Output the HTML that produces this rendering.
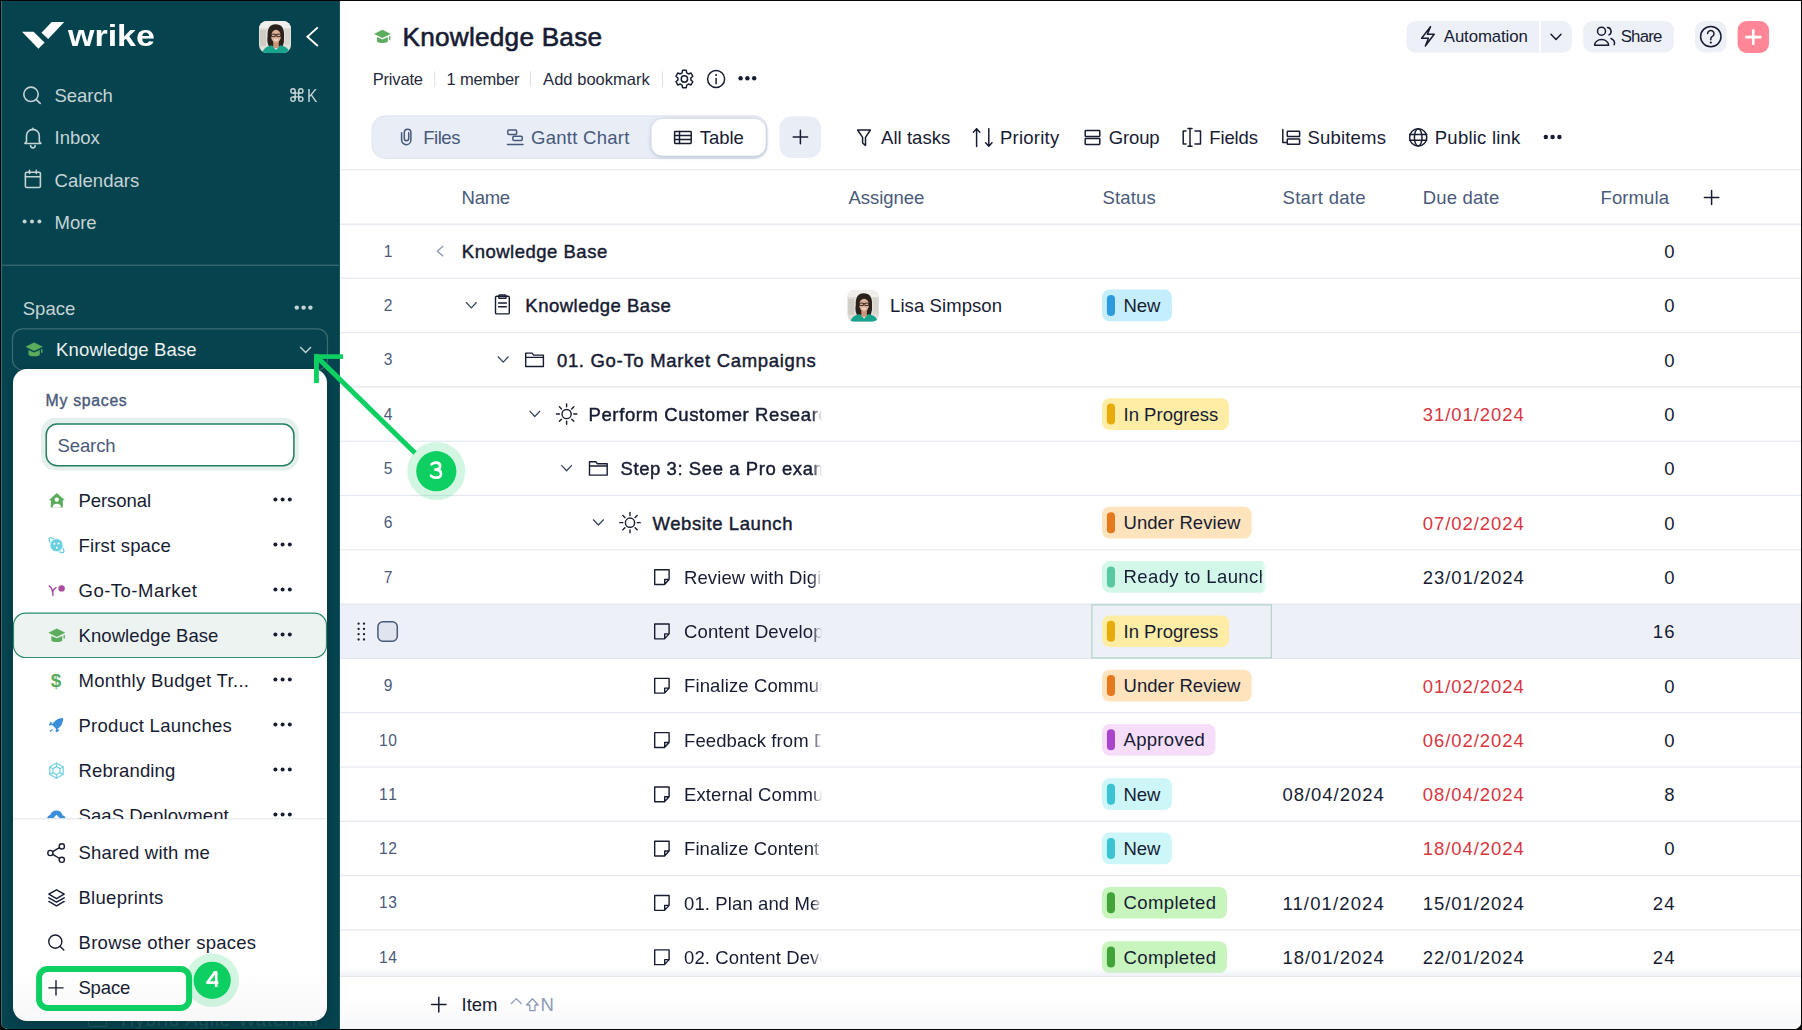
<!DOCTYPE html>
<html><head><meta charset="utf-8"><title>Wrike Knowledge Base</title>
<style>
html,body{margin:0;padding:0;}
body{width:1802px;height:1030px;overflow:hidden;background:#060606;font-family:"Liberation Sans",sans-serif;}
#pg{position:absolute;left:1px;top:1px;width:1800px;height:1028px;overflow:hidden;background:#fff;border-bottom-right-radius:7px;border-bottom-left-radius:7px;}
#inner{position:absolute;left:-1px;top:-1px;width:1802px;height:1030px;}
.abs{position:absolute;}
.t{position:absolute;line-height:0;white-space:nowrap;}
svg.abs{overflow:visible;}
</style></head><body>
<div id="pg"><div id="inner">
<div class="abs" style="left:0;top:0;width:340px;height:1030px;background:#05434e"></div>
<div class="abs" style="left:1px;top:0;width:1px;height:1030px;background:#3a6d75"></div>
<div class="abs" style="left:339px;top:0;width:1px;height:1030px;background:#1b5660"></div>
<svg class="abs" width="1802" height="1030" style="left:0;top:0"><polygon points="22,31.8 33.5,31.8 44.6,42.6 38.4,48.8" fill="#fff"/><polygon points="41.5,32.8 51.7,22 64.2,22 48.2,38.9" fill="#fff"/><clipPath id="av1"><rect x="259" y="21" width="32" height="32" rx="8"/></clipPath><g clip-path="url(#av1)"><g transform="translate(259,21) scale(1.0000)"><rect width="32" height="32" fill="#e2dfda"/><rect width="32" height="7" fill="#f1efeb"/><rect x="1" y="9" width="6" height="16" fill="#c9c4bc" opacity=".7"/><rect x="26" y="8" width="5" height="16" fill="#d6d2cb" opacity=".8"/><path d="M8.6 15 Q8 3.4 16.6 3.2 Q25.4 3.2 25 14.5 Q25.6 21 23.6 25.5 L10 25.5 Q7.6 21 8.6 15 Z" fill="#2a211c"/><rect x="14.2" y="20" width="5.6" height="7" fill="#c9967b"/><ellipse cx="17" cy="15.2" rx="4.9" ry="6.4" fill="#ddb197"/><path d="M12.4 13.2 h3.8 v2.4 h-3.8 z M17.8 13.2 h3.8 v2.4 h-3.8 z M16.2 13.8 h1.6" fill="none" stroke="#2a211c" stroke-width="0.9"/><path d="M15 18.6 q2 1.3 4 0" fill="none" stroke="#fff" stroke-width="0.9"/><path d="M3 32 Q5 25.5 12.6 24.2 L17 29 L21.4 24.2 Q29 25.5 31 32 Z" fill="#17a38c"/></g></g><polyline points="317.8,27.4 307.4,36.7 317.8,46" fill="none" stroke="#fff" stroke-width="1.9"/><circle cx="31" cy="94.3" r="7.2" fill="none" stroke="#c5d3d5" stroke-width="1.6" stroke-linecap="round" stroke-linejoin="round"/><line x1="36.3" y1="99.6" x2="40.2" y2="103.4" fill="none" stroke="#c5d3d5" stroke-width="1.6" stroke-linecap="round" stroke-linejoin="round"/><path d="M26.5 141.5 V135.8 a6.4 6.4 0 0 1 12.8 0 V141.5 l1.6 2 H24.9 z M32.9 128.3 v1.3 M30.6 145.6 a2.3 2.3 0 0 0 4.6 0" fill="none" stroke="#c5d3d5" stroke-width="1.6" stroke-linecap="round" stroke-linejoin="round"/><rect x="25.4" y="172.2" width="15" height="15.3" rx="1.3" fill="none" stroke="#c5d3d5" stroke-width="1.6" stroke-linecap="round" stroke-linejoin="round"/><path d="M25.4 176.7 H40.4 M29.5 170.3 v3.2 M36.3 170.3 v3.2" fill="none" stroke="#c5d3d5" stroke-width="1.6" stroke-linecap="round" stroke-linejoin="round"/><circle cx="24.6" cy="221.6" r="2" fill="#c5d3d5"/><circle cx="32" cy="221.6" r="2" fill="#c5d3d5"/><circle cx="39.4" cy="221.6" r="2" fill="#c5d3d5"/><rect x="1" y="264.6" width="338" height="1.3" fill="#3a6a72"/><circle cx="296.8" cy="307.6" r="2.2" fill="#c5d3d5"/><circle cx="303.6" cy="307.6" r="2.2" fill="#c5d3d5"/><circle cx="310.4" cy="307.6" r="2.2" fill="#c5d3d5"/><rect x="12.5" y="328.8" width="315" height="41" rx="10" fill="none" stroke="#3d6c74" stroke-width="1.2"/><polyline points="300.2,347 305.6,352.6 311,347" fill="none" stroke="#c5d3d5" stroke-width="1.4"/><g transform="translate(25.9,342.7) scale(1.03)"><polygon points="0,3.95 8,0 16,3.95 8,7.9" fill="#5cac5e" stroke="#5cac5e" stroke-width="0.5" stroke-linejoin="round"/><path d="M2.5,7.1 L8,9.5 L13.5,7.1 V11.2 Q13.5,13.2 8,13.2 Q2.5,13.2 2.5,11.2 Z" fill="#5cac5e"/><rect x="14.7" y="6.1" width="1.4" height="3.9" rx="0.7" fill="#5cac5e"/></g></svg><div class="t" style="left:68.35px;top:35.93px;font-size:29.2px;color:#fff;font-weight:700;transform:scaleX(1.1627);transform-origin:-0.15px 0;">wrike</div><div class="t" style="left:54.60px;top:96.32px;font-size:18.5px;color:#c5d3d5;letter-spacing:-0.060px;">Search</div><svg class="abs" width="1802" height="1030" style="left:0;top:0"><path d="M293 93.1 H300.8 M293 96.9 H300.8 M295.2 90.9 V99.1 M298.6 90.9 V99.1" fill="none" stroke="#c5d3d5" stroke-width="1.4"/><circle cx="293" cy="90.9" r="2.2" fill="none" stroke="#c5d3d5" stroke-width="1.4"/><circle cx="293" cy="99.1" r="2.2" fill="none" stroke="#c5d3d5" stroke-width="1.4"/><circle cx="300.8" cy="90.9" r="2.2" fill="none" stroke="#c5d3d5" stroke-width="1.4"/><circle cx="300.8" cy="99.1" r="2.2" fill="none" stroke="#c5d3d5" stroke-width="1.4"/></svg><div class="t" style="left:306.60px;top:95.82px;font-size:18.5px;color:#c5d3d5;transform:scaleX(0.8422);transform-origin:0.00px 0;">K</div><div class="t" style="left:54.60px;top:138.32px;font-size:18.5px;color:#c5d3d5;letter-spacing:-0.045px;">Inbox</div><div class="t" style="left:54.60px;top:180.82px;font-size:18.5px;color:#c5d3d5;letter-spacing:0.048px;">Calendars</div><div class="t" style="left:54.60px;top:223.12px;font-size:18.5px;color:#c5d3d5;letter-spacing:-0.045px;">More</div><div class="t" style="left:22.80px;top:309.32px;font-size:18.5px;color:#c5d3d5;letter-spacing:-0.012px;">Space</div><div class="t" style="left:56.10px;top:350.12px;font-size:18.5px;color:#eef2f2;letter-spacing:0.127px;">Knowledge Base</div><div class="t" style="left:121.00px;top:1019.62px;font-size:18.5px;color:#1f555c;letter-spacing:0.944px;">Hybrid Agile-Waterfall</div><div class="abs" style="left:88px;top:1016px;width:17px;height:9px;border:1.4px solid #1f555c;border-radius:2px"></div><svg class="abs" width="1802" height="1030" style="left:0;top:0"><g transform="translate(374.5,30) scale(0.99)"><polygon points="0,3.95 8,0 16,3.95 8,7.9" fill="#5cac5e" stroke="#5cac5e" stroke-width="0.5" stroke-linejoin="round"/><path d="M2.5,7.1 L8,9.5 L13.5,7.1 V11.2 Q13.5,13.2 8,13.2 Q2.5,13.2 2.5,11.2 Z" fill="#5cac5e"/><rect x="14.7" y="6.1" width="1.4" height="3.9" rx="0.7" fill="#5cac5e"/></g><rect x="434.2" y="71.3" width="1" height="15.4" fill="#d8deea"/><rect x="530.0" y="71.3" width="1" height="15.4" fill="#d8deea"/><rect x="661.9" y="71.3" width="1" height="15.4" fill="#d8deea"/><polygon points="682.07,72.93 682.55,70.29 686.25,70.29 686.73,72.93 687.65,73.37 688.49,73.95 691.01,73.04 692.86,76.25 690.82,77.98 690.90,79.00 690.82,80.02 692.86,81.75 691.01,84.96 688.49,84.05 687.65,84.63 686.73,85.07 686.25,87.71 682.55,87.71 682.07,85.07 681.15,84.63 680.31,84.05 677.79,84.96 675.94,81.75 677.98,80.02 677.90,79.00 677.98,77.98 675.94,76.25 677.79,73.04 680.31,73.95 681.15,73.37" fill="none" stroke="#171c33" stroke-width="1.5" stroke-linecap="round" stroke-linejoin="round" stroke-width="1.3"/><circle cx="684.4" cy="79" r="3.2" fill="none" stroke="#171c33" stroke-width="1.5" stroke-linecap="round" stroke-linejoin="round" stroke-width="1.3"/><circle cx="716.1" cy="79" r="8.5" fill="none" stroke="#171c33" stroke-width="1.5" stroke-linecap="round" stroke-linejoin="round" stroke-width="1.3"/><path d="M716.1 78.4 v5.4" fill="none" stroke="#171c33" stroke-width="1.5" stroke-linecap="round" stroke-linejoin="round" stroke-width="1.3"/><circle cx="716.1" cy="75.1" r="1" fill="#171c33"/><circle cx="740.6" cy="78.3" r="2.2" fill="#171c33"/><circle cx="747.4" cy="78.3" r="2.2" fill="#171c33"/><circle cx="754.2" cy="78.3" r="2.2" fill="#171c33"/><rect x="1406.4" y="21.1" width="165.6" height="31.6" rx="9" fill="#edf0f7"/><rect x="1539.3" y="21.1" width="1.7" height="31.6" fill="#fff"/><path d="M1430.5 26.6 L1421.6 38.2 H1428.5 L1425.3 46 L1434.2 34.2 H1427.4 Z" fill="none" stroke="#171c33" stroke-width="1.5" stroke-linecap="round" stroke-linejoin="round" stroke-width="1.4"/><polyline points="1551,34.2 1556,39.4 1561,34.2" fill="none" stroke="#171c33" stroke-width="1.5" stroke-linecap="round" stroke-linejoin="round" stroke-width="1.3"/><rect x="1583.2" y="21" width="90.6" height="31.5" rx="9" fill="#edf0f7"/><circle cx="1601.5" cy="31.2" r="4" fill="none" stroke="#171c33" stroke-width="1.5" stroke-linecap="round" stroke-linejoin="round" stroke-width="1.4"/><path d="M1594.6 45.2 a7 5.6 0 0 1 14 0 Z" fill="none" stroke="#171c33" stroke-width="1.5" stroke-linecap="round" stroke-linejoin="round" stroke-width="1.4"/><path d="M1607.5 27.4 a4 4 0 0 1 1.5 7.5 M1611 38.5 a6 5 0 0 1 3.2 6.3" fill="none" stroke="#171c33" stroke-width="1.5" stroke-linecap="round" stroke-linejoin="round" stroke-width="1.4"/><rect x="1695" y="21" width="31.5" height="31.5" rx="9" fill="#edf0f7"/><circle cx="1710.8" cy="36.6" r="10.2" fill="none" stroke="#171c33" stroke-width="1.5" stroke-linecap="round" stroke-linejoin="round" stroke-width="1.4"/><path d="M1707.6 33.6 a3.2 3.2 0 1 1 4.8 2.8 q-1.6 0.9 -1.6 2.6 v0.8" fill="none" stroke="#171c33" stroke-width="1.5" stroke-linecap="round" stroke-linejoin="round" stroke-width="1.5"/><circle cx="1710.8" cy="42.6" r="1.1" fill="#171c33"/><rect x="1737.6" y="21" width="31.4" height="31.9" rx="9" fill="#ff8696"/><path d="M1753.3 29.2 V45 M1745.2 37.1 H1761.4" stroke="#fff" stroke-width="2.6"/><rect x="372" y="115.8" width="395" height="42.6" rx="13" fill="#e9edf6"/><rect x="372" y="115.8" width="395" height="42.6" rx="13" fill="none" stroke="#dfe4ef" stroke-width="1"/><rect x="651.5" y="119" width="114.2" height="36.8" rx="11" fill="#fff" style="filter:drop-shadow(0 1px 2px rgba(70,90,130,.35))"/><path d="M401.6 132.8 V140 A4.65 4.65 0 0 0 410.9 140 V132.6 A3.3 3.3 0 0 0 404.3 132.6 V138.5 A2.2 2.2 0 0 0 408.7 138.5 V132.8" fill="none" stroke="#46597a" stroke-width="1.5" stroke-linecap="round" stroke-linejoin="round"/><rect x="507.8" y="130.1" width="8.8" height="4.4" rx="1" fill="none" stroke="#46597a" stroke-width="1.5" stroke-linecap="round" stroke-linejoin="round"/><rect x="512.9" y="136.2" width="9.3" height="4.4" rx="1" fill="none" stroke="#46597a" stroke-width="1.5" stroke-linecap="round" stroke-linejoin="round"/><path d="M507.5 144.6 H523" fill="none" stroke="#46597a" stroke-width="1.5" stroke-linecap="round" stroke-linejoin="round"/><rect x="674.6" y="131.6" width="16.6" height="11.8" rx="0.6" fill="none" stroke="#171c33" stroke-width="1.5" stroke-linecap="round" stroke-linejoin="round" stroke-width="1.4"/><path d="M674.6 135.6 H691.2 M674.6 139.5 H691.2 M679.5 131.6 V143.4" fill="none" stroke="#171c33" stroke-width="1.5" stroke-linecap="round" stroke-linejoin="round" stroke-width="1.3"/><rect x="779.4" y="116.3" width="41.6" height="41.8" rx="12" fill="#e9edf6"/><path d="M800.4 130.3 V143.7 M793.2 137 H807.6" fill="none" stroke="#171c33" stroke-width="1.5" stroke-linecap="round" stroke-linejoin="round" stroke-width="1.5"/><path d="M857.6 130 H870.4 L865.5 137.3 V145.5 L862.6 143 V137.3 Z" fill="none" stroke="#171c33" stroke-width="1.5" stroke-linecap="round" stroke-linejoin="round" stroke-width="1.4"/><path d="M976.6 146.5 V128.8 M973.4 132.2 L976.6 128.8 L979.8 132.2 M988.8 128.8 V146.2 M985.6 142.8 L988.8 146.2 L992 142.8" fill="none" stroke="#171c33" stroke-width="1.5" stroke-linecap="round" stroke-linejoin="round" stroke-width="1.4"/><rect x="1085.2" y="130.6" width="14.6" height="5.8" rx="0.6" fill="none" stroke="#171c33" stroke-width="1.5" stroke-linecap="round" stroke-linejoin="round" stroke-width="1.4"/><rect x="1085.2" y="138.6" width="14.6" height="5.8" rx="0.6" fill="none" stroke="#171c33" stroke-width="1.5" stroke-linecap="round" stroke-linejoin="round" stroke-width="1.4"/><path d="M1186 131 H1183.2 V144 H1186 M1195 131 H1200.5 V144 H1195 M1190 128.6 V146.3 M1188 128.6 H1192 M1188 146.3 H1192" fill="none" stroke="#171c33" stroke-width="1.5" stroke-linecap="round" stroke-linejoin="round" stroke-width="1.3"/><path d="M1282.8 129.6 V142.6 H1287" fill="none" stroke="#171c33" stroke-width="1.5" stroke-linecap="round" stroke-linejoin="round" stroke-width="1.3"/><rect x="1287.3" y="131.2" width="12.3" height="5.3" rx="0.6" fill="none" stroke="#171c33" stroke-width="1.5" stroke-linecap="round" stroke-linejoin="round" stroke-width="1.3"/><rect x="1287.3" y="139" width="12.3" height="5.3" rx="0.6" fill="none" stroke="#171c33" stroke-width="1.5" stroke-linecap="round" stroke-linejoin="round" stroke-width="1.3"/><circle cx="1418.2" cy="137.4" r="8.6" fill="none" stroke="#171c33" stroke-width="1.5" stroke-linecap="round" stroke-linejoin="round" stroke-width="1.3"/><ellipse cx="1418.2" cy="137.4" rx="3.8" ry="8.6" fill="none" stroke="#171c33" stroke-width="1.5" stroke-linecap="round" stroke-linejoin="round" stroke-width="1.3"/><path d="M1409.6 134.6 H1426.8 M1409.6 140.2 H1426.8" fill="none" stroke="#171c33" stroke-width="1.5" stroke-linecap="round" stroke-linejoin="round" stroke-width="1.3"/><circle cx="1545.8" cy="137" r="2.2" fill="#171c33"/><circle cx="1552.6" cy="137" r="2.2" fill="#171c33"/><circle cx="1559.4" cy="137" r="2.2" fill="#171c33"/><rect x="340" y="169" width="1461" height="1.3" fill="#e8ecf3"/><path d="M1711.6 190.6 V204.6 M1704.4 197.6 H1718.8" fill="none" stroke="#171c33" stroke-width="1.5" stroke-linecap="round" stroke-linejoin="round" stroke-width="1.5"/><rect x="340" y="223.6" width="1461" height="1.3" fill="#e3e8f0"/></svg><div class="t" style="left:402.60px;top:37.46px;font-size:26.2px;color:#171c33;-webkit-text-stroke:0.60px #171c33;letter-spacing:0.221px;">Knowledge Base</div><div class="t" style="left:372.70px;top:79.11px;font-size:16.5px;color:#262b3d;letter-spacing:-0.176px;">Private</div><div class="t" style="left:446.60px;top:79.11px;font-size:16.5px;color:#262b3d;letter-spacing:-0.199px;">1 member</div><div class="t" style="left:543.10px;top:79.11px;font-size:16.5px;color:#262b3d;letter-spacing:0.034px;">Add bookmark</div><div class="t" style="left:1443.80px;top:37.40px;font-size:16.8px;color:#171c33;letter-spacing:-0.101px;">Automation</div><div class="t" style="left:1620.70px;top:37.00px;font-size:16.8px;color:#171c33;letter-spacing:-0.778px;">Share</div><div class="t" style="left:423.20px;top:138.12px;font-size:18.5px;color:#46597a;letter-spacing:-0.445px;">Files</div><div class="t" style="left:531.00px;top:138.12px;font-size:18.5px;color:#46597a;letter-spacing:0.275px;">Gantt Chart</div><div class="t" style="left:699.80px;top:137.92px;font-size:18.5px;color:#171c33;letter-spacing:-0.054px;">Table</div><div class="t" style="left:881.00px;top:138.22px;font-size:18.5px;color:#171c33;letter-spacing:0.054px;">All tasks</div><div class="t" style="left:1000.00px;top:138.22px;font-size:18.5px;color:#171c33;letter-spacing:0.231px;">Priority</div><div class="t" style="left:1108.70px;top:138.22px;font-size:18.5px;color:#171c33;letter-spacing:-0.133px;">Group</div><div class="t" style="left:1209.20px;top:138.22px;font-size:18.5px;color:#171c33;letter-spacing:-0.110px;">Fields</div><div class="t" style="left:1307.40px;top:138.22px;font-size:18.5px;color:#171c33;letter-spacing:0.200px;">Subitems</div><div class="t" style="left:1434.80px;top:138.22px;font-size:18.5px;color:#171c33;letter-spacing:0.226px;">Public link</div><div class="t" style="left:461.60px;top:198.02px;font-size:18.5px;color:#4a5a7a;letter-spacing:-0.283px;">Name</div><div class="t" style="left:848.40px;top:198.02px;font-size:18.5px;color:#4a5a7a;letter-spacing:-0.033px;">Assignee</div><div class="t" style="left:1102.40px;top:198.02px;font-size:18.5px;color:#4a5a7a;letter-spacing:0.190px;">Status</div><div class="t" style="left:1282.50px;top:198.02px;font-size:18.5px;color:#4a5a7a;letter-spacing:0.322px;">Start date</div><div class="t" style="left:1422.80px;top:198.02px;font-size:18.5px;color:#4a5a7a;letter-spacing:0.184px;">Due date</div><div class="t" style="left:1600.50px;top:198.02px;font-size:18.5px;color:#4a5a7a;letter-spacing:0.101px;">Formula</div><svg class="abs" width="1802" height="1030" style="left:0;top:0"><rect x="340" y="604.10" width="1461" height="54.30" fill="#edf0f7"/><rect x="340" y="277.70" width="1461" height="1.2" fill="#e3e8f0"/><polyline points="443.2,245.95 437.4,251.15 443.2,256.35" fill="none" stroke="#8e9ab4" stroke-width="1.4"/><rect x="340" y="332.00" width="1461" height="1.2" fill="#e3e8f0"/><polyline points="466.00,302.25 471.30,307.85 476.60,302.25" fill="none" stroke="#3a4560" stroke-width="1.3"/><rect x="495.50" y="296.25" width="13.8" height="17.6" rx="1.2" fill="none" stroke="#171c33" stroke-width="1.4" stroke-linecap="round" stroke-linejoin="round"/><rect x="498.80" y="295.05" width="7.2" height="3.2" rx="0.8" fill="none" stroke="#171c33" stroke-width="1.4" stroke-linecap="round" stroke-linejoin="round" fill="#fff"/><path d="M498.60 302.95 H506.40 M498.60 306.75 H506.40" fill="none" stroke="#171c33" stroke-width="1.4" stroke-linecap="round" stroke-linejoin="round"/><rect x="1102" y="289.60" width="69.9" height="31.7" rx="7.5" fill="#c4eefd"/><rect x="1106.9" y="294.95" width="8.1" height="21" rx="4" fill="#2d9bdb"/><rect x="340" y="386.30" width="1461" height="1.2" fill="#e3e8f0"/><polyline points="497.90,356.55 503.20,362.15 508.50,356.55" fill="none" stroke="#3a4560" stroke-width="1.3"/><path d="M525.70 366.55 V353.15 H532.00 L533.60 355.15 H543.40 V366.55 Z M525.70 357.35 H543.40" fill="none" stroke="#171c33" stroke-width="1.4" stroke-linecap="round" stroke-linejoin="round"/><rect x="340" y="440.60" width="1461" height="1.2" fill="#e3e8f0"/><polyline points="529.50,410.85 534.80,416.45 540.10,410.85" fill="none" stroke="#3a4560" stroke-width="1.3"/><circle cx="566.60" cy="414.05" r="4.6" fill="none" stroke="#171c33" stroke-width="1.4" stroke-linecap="round" stroke-linejoin="round"/><line x1="573.80" y1="414.05" x2="576.80" y2="414.05" fill="none" stroke="#171c33" stroke-width="1.4" stroke-linecap="round" stroke-linejoin="round"/><line x1="571.69" y1="419.14" x2="573.81" y2="421.26" fill="none" stroke="#171c33" stroke-width="1.4" stroke-linecap="round" stroke-linejoin="round"/><line x1="566.60" y1="421.25" x2="566.60" y2="424.25" fill="none" stroke="#171c33" stroke-width="1.4" stroke-linecap="round" stroke-linejoin="round"/><line x1="561.51" y1="419.14" x2="559.39" y2="421.26" fill="none" stroke="#171c33" stroke-width="1.4" stroke-linecap="round" stroke-linejoin="round"/><line x1="559.40" y1="414.05" x2="556.40" y2="414.05" fill="none" stroke="#171c33" stroke-width="1.4" stroke-linecap="round" stroke-linejoin="round"/><line x1="561.51" y1="408.96" x2="559.39" y2="406.84" fill="none" stroke="#171c33" stroke-width="1.4" stroke-linecap="round" stroke-linejoin="round"/><line x1="566.60" y1="406.85" x2="566.60" y2="403.85" fill="none" stroke="#171c33" stroke-width="1.4" stroke-linecap="round" stroke-linejoin="round"/><line x1="571.69" y1="408.96" x2="573.81" y2="406.84" fill="none" stroke="#171c33" stroke-width="1.4" stroke-linecap="round" stroke-linejoin="round"/><rect x="1102" y="398.20" width="127" height="31.7" rx="7.5" fill="#ffeda6"/><rect x="1106.9" y="403.55" width="8.1" height="21" rx="4" fill="#e7ab0b"/><rect x="340" y="494.90" width="1461" height="1.2" fill="#e3e8f0"/><polyline points="561.30,465.15 566.60,470.75 571.90,465.15" fill="none" stroke="#3a4560" stroke-width="1.3"/><path d="M589.50 475.15 V461.75 H595.80 L597.40 463.75 H607.20 V475.15 Z M589.50 465.95 H607.20" fill="none" stroke="#171c33" stroke-width="1.4" stroke-linecap="round" stroke-linejoin="round"/><rect x="340" y="549.20" width="1461" height="1.2" fill="#e3e8f0"/><polyline points="593.10,519.45 598.40,525.05 603.70,519.45" fill="none" stroke="#3a4560" stroke-width="1.3"/><circle cx="630.00" cy="522.65" r="4.6" fill="none" stroke="#171c33" stroke-width="1.4" stroke-linecap="round" stroke-linejoin="round"/><line x1="637.20" y1="522.65" x2="640.20" y2="522.65" fill="none" stroke="#171c33" stroke-width="1.4" stroke-linecap="round" stroke-linejoin="round"/><line x1="635.09" y1="527.74" x2="637.21" y2="529.86" fill="none" stroke="#171c33" stroke-width="1.4" stroke-linecap="round" stroke-linejoin="round"/><line x1="630.00" y1="529.85" x2="630.00" y2="532.85" fill="none" stroke="#171c33" stroke-width="1.4" stroke-linecap="round" stroke-linejoin="round"/><line x1="624.91" y1="527.74" x2="622.79" y2="529.86" fill="none" stroke="#171c33" stroke-width="1.4" stroke-linecap="round" stroke-linejoin="round"/><line x1="622.80" y1="522.65" x2="619.80" y2="522.65" fill="none" stroke="#171c33" stroke-width="1.4" stroke-linecap="round" stroke-linejoin="round"/><line x1="624.91" y1="517.56" x2="622.79" y2="515.44" fill="none" stroke="#171c33" stroke-width="1.4" stroke-linecap="round" stroke-linejoin="round"/><line x1="630.00" y1="515.45" x2="630.00" y2="512.45" fill="none" stroke="#171c33" stroke-width="1.4" stroke-linecap="round" stroke-linejoin="round"/><line x1="635.09" y1="517.56" x2="637.21" y2="515.44" fill="none" stroke="#171c33" stroke-width="1.4" stroke-linecap="round" stroke-linejoin="round"/><rect x="1102" y="506.80" width="149.7" height="31.7" rx="7.5" fill="#ffe3bd"/><rect x="1106.9" y="512.15" width="8.1" height="21" rx="4" fill="#e5791d"/><rect x="340" y="603.50" width="1461" height="1.2" fill="#e3e8f0"/><path d="M654.70 569.75 H669.10 V579.55 L664.50 584.55 H654.70 Z M669.10 579.55 H664.70 V584.35" fill="none" stroke="#171c33" stroke-width="1.4" stroke-linecap="round" stroke-linejoin="round"/><defs><linearGradient id="rf" x1="0" x2="1"><stop offset="0.965" stop-color="#d3f8ea"/><stop offset="1" stop-color="#d3f8ea" stop-opacity="0"/></linearGradient></defs><rect x="1102" y="561.10" width="165.5" height="31.7" rx="7.5" fill="url(#rf)"/><rect x="1106.9" y="566.45" width="8.1" height="21" rx="4" fill="#57c8a2"/><rect x="340" y="657.80" width="1461" height="1.2" fill="#e3e8f0"/><circle cx="358.6" cy="623.7" r="1.15" fill="#171c33"/><circle cx="358.6" cy="628.9" r="1.15" fill="#171c33"/><circle cx="358.6" cy="634.2" r="1.15" fill="#171c33"/><circle cx="358.6" cy="639.5" r="1.15" fill="#171c33"/><circle cx="364" cy="623.7" r="1.15" fill="#171c33"/><circle cx="364" cy="628.9" r="1.15" fill="#171c33"/><circle cx="364" cy="634.2" r="1.15" fill="#171c33"/><circle cx="364" cy="639.5" r="1.15" fill="#171c33"/><rect x="377.9" y="621.8" width="19.4" height="19.4" rx="5" fill="#dfe4ee" stroke="#46597a" stroke-width="1.5"/><path d="M654.70 624.05 H669.10 V633.85 L664.50 638.85 H654.70 Z M669.10 633.85 H664.70 V638.65" fill="none" stroke="#171c33" stroke-width="1.4" stroke-linecap="round" stroke-linejoin="round"/><rect x="1102" y="615.40" width="127" height="31.7" rx="7.5" fill="#ffeda6"/><rect x="1106.9" y="620.75" width="8.1" height="21" rx="4" fill="#e7ab0b"/><rect x="340" y="712.10" width="1461" height="1.2" fill="#e3e8f0"/><path d="M654.70 678.35 H669.10 V688.15 L664.50 693.15 H654.70 Z M669.10 688.15 H664.70 V692.95" fill="none" stroke="#171c33" stroke-width="1.4" stroke-linecap="round" stroke-linejoin="round"/><rect x="1102" y="669.70" width="149.7" height="31.7" rx="7.5" fill="#ffe3bd"/><rect x="1106.9" y="675.05" width="8.1" height="21" rx="4" fill="#e5791d"/><rect x="340" y="766.40" width="1461" height="1.2" fill="#e3e8f0"/><path d="M654.70 732.65 H669.10 V742.45 L664.50 747.45 H654.70 Z M669.10 742.45 H664.70 V747.25" fill="none" stroke="#171c33" stroke-width="1.4" stroke-linecap="round" stroke-linejoin="round"/><rect x="1102" y="724.00" width="113.5" height="31.7" rx="7.5" fill="#f6defa"/><rect x="1106.9" y="729.35" width="8.1" height="21" rx="4" fill="#a845cb"/><rect x="340" y="820.70" width="1461" height="1.2" fill="#e3e8f0"/><path d="M654.70 786.95 H669.10 V796.75 L664.50 801.75 H654.70 Z M669.10 796.75 H664.70 V801.55" fill="none" stroke="#171c33" stroke-width="1.4" stroke-linecap="round" stroke-linejoin="round"/><rect x="1102" y="778.30" width="69.9" height="31.7" rx="7.5" fill="#cdf6f9"/><rect x="1106.9" y="783.65" width="8.1" height="21" rx="4" fill="#3cc3d2"/><rect x="340" y="875.00" width="1461" height="1.2" fill="#e3e8f0"/><path d="M654.70 841.25 H669.10 V851.05 L664.50 856.05 H654.70 Z M669.10 851.05 H664.70 V855.85" fill="none" stroke="#171c33" stroke-width="1.4" stroke-linecap="round" stroke-linejoin="round"/><rect x="1102" y="832.60" width="69.9" height="31.7" rx="7.5" fill="#cdf6f9"/><rect x="1106.9" y="837.95" width="8.1" height="21" rx="4" fill="#3cc3d2"/><rect x="340" y="929.30" width="1461" height="1.2" fill="#e3e8f0"/><path d="M654.70 895.55 H669.10 V905.35 L664.50 910.35 H654.70 Z M669.10 905.35 H664.70 V910.15" fill="none" stroke="#171c33" stroke-width="1.4" stroke-linecap="round" stroke-linejoin="round"/><rect x="1102" y="886.90" width="125" height="31.7" rx="7.5" fill="#c7f5bd"/><rect x="1106.9" y="892.25" width="8.1" height="21" rx="4" fill="#42a339"/><rect x="340" y="983.60" width="1461" height="1.2" fill="#e3e8f0"/><path d="M654.70 949.85 H669.10 V959.65 L664.50 964.65 H654.70 Z M669.10 959.65 H664.70 V964.45" fill="none" stroke="#171c33" stroke-width="1.4" stroke-linecap="round" stroke-linejoin="round"/><rect x="1102" y="941.20" width="125" height="31.7" rx="7.5" fill="#c7f5bd"/><rect x="1106.9" y="946.55" width="8.1" height="21" rx="4" fill="#42a339"/><clipPath id="av2"><rect x="847.2" y="290" width="31.8" height="31.8" rx="7"/></clipPath><g clip-path="url(#av2)"><g transform="translate(847.2,290) scale(0.9938)"><rect width="32" height="32" fill="#e2dfda"/><rect width="32" height="7" fill="#f1efeb"/><rect x="1" y="9" width="6" height="16" fill="#c9c4bc" opacity=".7"/><rect x="26" y="8" width="5" height="16" fill="#d6d2cb" opacity=".8"/><path d="M8.6 15 Q8 3.4 16.6 3.2 Q25.4 3.2 25 14.5 Q25.6 21 23.6 25.5 L10 25.5 Q7.6 21 8.6 15 Z" fill="#2a211c"/><rect x="14.2" y="20" width="5.6" height="7" fill="#c9967b"/><ellipse cx="17" cy="15.2" rx="4.9" ry="6.4" fill="#ddb197"/><path d="M12.4 13.2 h3.8 v2.4 h-3.8 z M17.8 13.2 h3.8 v2.4 h-3.8 z M16.2 13.8 h1.6" fill="none" stroke="#2a211c" stroke-width="0.9"/><path d="M15 18.6 q2 1.3 4 0" fill="none" stroke="#fff" stroke-width="0.9"/><path d="M3 32 Q5 25.5 12.6 24.2 L17 29 L21.4 24.2 Q29 25.5 31 32 Z" fill="#17a38c"/></g></g><rect x="1091.9" y="604.9" width="179.4" height="53" fill="none" stroke="#a8cdc2" stroke-width="1"/></svg><div class="t" style="left:383.70px;top:251.82px;font-size:15.6px;color:#4a5a7a;">1</div><div class="t" style="left:461.82px;top:252.02px;font-size:18.5px;color:#171c33;-webkit-text-stroke:0.44px #171c33;letter-spacing:0.501px;">Knowledge Base</div><div class="t" style="left:1664.23px;top:252.12px;font-size:18.5px;color:#171c33;">0</div><div class="t" style="left:383.70px;top:306.12px;font-size:15.6px;color:#4a5a7a;">2</div><div class="t" style="left:525.32px;top:306.32px;font-size:18.5px;color:#171c33;-webkit-text-stroke:0.44px #171c33;letter-spacing:0.501px;">Knowledge Base</div><div class="t" style="left:1123.50px;top:306.02px;font-size:18.5px;color:#171c33;letter-spacing:-0.073px;">New</div><div class="t" style="left:1664.23px;top:306.42px;font-size:18.5px;color:#171c33;">0</div><div class="t" style="left:383.70px;top:360.42px;font-size:15.6px;color:#4a5a7a;">3</div><div class="t" style="left:556.92px;top:360.62px;font-size:18.5px;color:#171c33;-webkit-text-stroke:0.44px #171c33;letter-spacing:0.688px;">01. Go-To Market Campaigns</div><div class="t" style="left:1664.23px;top:360.72px;font-size:18.5px;color:#171c33;">0</div><div class="t" style="left:383.70px;top:414.72px;font-size:15.6px;color:#4a5a7a;">4</div><div class="t" style="left:588.52px;top:414.92px;font-size:18.5px;color:#171c33;-webkit-text-stroke:0.44px #171c33;letter-spacing:0.609px;width:233.48px;overflow:hidden;height:24.1px;line-height:24.1px;top:402.86px;-webkit-mask-image:linear-gradient(to right,#000 calc(100% - 10px),transparent);">Perform Customer Research</div><div class="t" style="left:1123.50px;top:414.62px;font-size:18.5px;color:#171c33;letter-spacing:0.012px;">In Progress</div><div class="t" style="left:1422.70px;top:415.02px;font-size:18.5px;color:#d8363f;letter-spacing:0.934px;">31/01/2024</div><div class="t" style="left:1664.23px;top:415.02px;font-size:18.5px;color:#171c33;">0</div><div class="t" style="left:383.70px;top:469.02px;font-size:15.6px;color:#4a5a7a;">5</div><div class="t" style="left:620.52px;top:469.22px;font-size:18.5px;color:#171c33;-webkit-text-stroke:0.44px #171c33;letter-spacing:0.572px;width:201.48px;overflow:hidden;height:24.1px;line-height:24.1px;top:457.16px;-webkit-mask-image:linear-gradient(to right,#000 calc(100% - 10px),transparent);">Step 3: See a Pro example</div><div class="t" style="left:1664.23px;top:469.32px;font-size:18.5px;color:#171c33;">0</div><div class="t" style="left:383.70px;top:523.32px;font-size:15.6px;color:#4a5a7a;">6</div><div class="t" style="left:652.52px;top:523.52px;font-size:18.5px;color:#171c33;-webkit-text-stroke:0.44px #171c33;letter-spacing:0.587px;">Website Launch</div><div class="t" style="left:1123.50px;top:523.22px;font-size:18.5px;color:#171c33;letter-spacing:0.061px;">Under Review</div><div class="t" style="left:1422.70px;top:523.62px;font-size:18.5px;color:#d8363f;letter-spacing:0.934px;">07/02/2024</div><div class="t" style="left:1664.23px;top:523.62px;font-size:18.5px;color:#171c33;">0</div><div class="t" style="left:383.70px;top:577.62px;font-size:15.6px;color:#4a5a7a;">7</div><div class="t" style="left:684.00px;top:577.82px;font-size:18.5px;color:#171c33;letter-spacing:0.104px;width:138.00px;overflow:hidden;height:24.1px;line-height:24.1px;top:565.76px;-webkit-mask-image:linear-gradient(to right,#000 calc(100% - 10px),transparent);">Review with Digital</div><div class="t" style="left:1123.50px;top:577.52px;font-size:18.5px;color:#171c33;letter-spacing:0.400px;width:139.50px;overflow:hidden;height:24.1px;line-height:24.1px;top:565.46px;-webkit-mask-image:linear-gradient(to right,#000 calc(100% - 2px),transparent);">Ready to Launch</div><div class="t" style="left:1422.70px;top:577.92px;font-size:18.5px;color:#171c33;letter-spacing:0.934px;">23/01/2024</div><div class="t" style="left:1664.23px;top:577.92px;font-size:18.5px;color:#171c33;">0</div><div class="t" style="left:684.00px;top:632.12px;font-size:18.5px;color:#171c33;letter-spacing:0.119px;width:138.00px;overflow:hidden;height:24.1px;line-height:24.1px;top:620.06px;-webkit-mask-image:linear-gradient(to right,#000 calc(100% - 10px),transparent);">Content Development</div><div class="t" style="left:1123.50px;top:631.82px;font-size:18.5px;color:#171c33;letter-spacing:0.012px;">In Progress</div><div class="t" style="left:1652.68px;top:632.22px;font-size:18.5px;color:#171c33;letter-spacing:1.235px;">16</div><div class="t" style="left:383.70px;top:686.22px;font-size:15.6px;color:#4a5a7a;">9</div><div class="t" style="left:684.00px;top:686.42px;font-size:18.5px;color:#171c33;letter-spacing:0.113px;width:138.00px;overflow:hidden;height:24.1px;line-height:24.1px;top:674.36px;-webkit-mask-image:linear-gradient(to right,#000 calc(100% - 10px),transparent);">Finalize Communication</div><div class="t" style="left:1123.50px;top:686.12px;font-size:18.5px;color:#171c33;letter-spacing:0.061px;">Under Review</div><div class="t" style="left:1422.70px;top:686.52px;font-size:18.5px;color:#d8363f;letter-spacing:0.934px;">01/02/2024</div><div class="t" style="left:1664.23px;top:686.52px;font-size:18.5px;color:#171c33;">0</div><div class="t" style="left:379.00px;top:740.52px;font-size:15.6px;color:#4a5a7a;letter-spacing:0.545px;">10</div><div class="t" style="left:684.00px;top:740.72px;font-size:18.5px;color:#171c33;letter-spacing:0.108px;width:138.00px;overflow:hidden;height:24.1px;line-height:24.1px;top:728.66px;-webkit-mask-image:linear-gradient(to right,#000 calc(100% - 10px),transparent);">Feedback from Digital</div><div class="t" style="left:1123.50px;top:740.42px;font-size:18.5px;color:#171c33;letter-spacing:0.303px;">Approved</div><div class="t" style="left:1422.70px;top:740.82px;font-size:18.5px;color:#d8363f;letter-spacing:0.934px;">06/02/2024</div><div class="t" style="left:1664.23px;top:740.82px;font-size:18.5px;color:#171c33;">0</div><div class="t" style="left:379.00px;top:794.82px;font-size:15.6px;color:#4a5a7a;letter-spacing:1.715px;">11</div><div class="t" style="left:684.00px;top:795.02px;font-size:18.5px;color:#171c33;letter-spacing:0.115px;width:138.00px;overflow:hidden;height:24.1px;line-height:24.1px;top:782.96px;-webkit-mask-image:linear-gradient(to right,#000 calc(100% - 10px),transparent);">External Communication</div><div class="t" style="left:1123.50px;top:794.72px;font-size:18.5px;color:#171c33;letter-spacing:-0.073px;">New</div><div class="t" style="left:1282.40px;top:795.12px;font-size:18.5px;color:#171c33;letter-spacing:0.979px;">08/04/2024</div><div class="t" style="left:1422.70px;top:795.12px;font-size:18.5px;color:#d8363f;letter-spacing:0.934px;">08/04/2024</div><div class="t" style="left:1664.23px;top:795.12px;font-size:18.5px;color:#171c33;">8</div><div class="t" style="left:379.00px;top:849.12px;font-size:15.6px;color:#4a5a7a;letter-spacing:0.545px;">12</div><div class="t" style="left:684.00px;top:849.32px;font-size:18.5px;color:#171c33;letter-spacing:0.101px;width:138.00px;overflow:hidden;height:24.1px;line-height:24.1px;top:837.26px;-webkit-mask-image:linear-gradient(to right,#000 calc(100% - 10px),transparent);">Finalize Content for</div><div class="t" style="left:1123.50px;top:849.02px;font-size:18.5px;color:#171c33;letter-spacing:-0.073px;">New</div><div class="t" style="left:1422.70px;top:849.42px;font-size:18.5px;color:#d8363f;letter-spacing:0.934px;">18/04/2024</div><div class="t" style="left:1664.23px;top:849.42px;font-size:18.5px;color:#171c33;">0</div><div class="t" style="left:379.00px;top:903.42px;font-size:15.6px;color:#4a5a7a;letter-spacing:0.545px;">13</div><div class="t" style="left:684.00px;top:903.62px;font-size:18.5px;color:#171c33;letter-spacing:0.114px;width:138.00px;overflow:hidden;height:24.1px;line-height:24.1px;top:891.56px;-webkit-mask-image:linear-gradient(to right,#000 calc(100% - 10px),transparent);">01. Plan and Measure</div><div class="t" style="left:1123.50px;top:903.32px;font-size:18.5px;color:#171c33;letter-spacing:0.382px;">Completed</div><div class="t" style="left:1282.40px;top:903.72px;font-size:18.5px;color:#171c33;letter-spacing:1.133px;">11/01/2024</div><div class="t" style="left:1422.70px;top:903.72px;font-size:18.5px;color:#171c33;letter-spacing:0.934px;">15/01/2024</div><div class="t" style="left:1652.68px;top:903.72px;font-size:18.5px;color:#171c33;letter-spacing:1.235px;">24</div><div class="t" style="left:379.00px;top:957.72px;font-size:15.6px;color:#4a5a7a;letter-spacing:0.545px;">14</div><div class="t" style="left:684.00px;top:957.92px;font-size:18.5px;color:#171c33;letter-spacing:0.114px;width:138.00px;overflow:hidden;height:24.1px;line-height:24.1px;top:945.86px;-webkit-mask-image:linear-gradient(to right,#000 calc(100% - 10px),transparent);">02. Content Development</div><div class="t" style="left:1123.50px;top:957.62px;font-size:18.5px;color:#171c33;letter-spacing:0.382px;">Completed</div><div class="t" style="left:1282.40px;top:958.02px;font-size:18.5px;color:#171c33;letter-spacing:0.979px;">18/01/2024</div><div class="t" style="left:1422.70px;top:958.02px;font-size:18.5px;color:#171c33;letter-spacing:0.934px;">22/01/2024</div><div class="t" style="left:1652.68px;top:958.02px;font-size:18.5px;color:#171c33;letter-spacing:1.235px;">24</div><div class="t" style="left:890.00px;top:306.42px;font-size:18.5px;color:#171c33;letter-spacing:0.087px;">Lisa Simpson</div><div class="abs" style="left:340px;top:968px;width:1461px;height:9px;background:linear-gradient(rgba(230,233,240,0),rgba(222,226,234,.55))"></div><div class="abs" style="left:340px;top:976.4px;width:1461px;height:52px;background:linear-gradient(#fff 40%,#f6f7f9);border-top:1.2px solid #e4e8ef"></div><svg class="abs" width="1802" height="1030" style="left:0;top:0"><path d="M438.8 997.2 V1012 M431.6 1004.6 H446" fill="none" stroke="#171c33" stroke-width="1.5" stroke-linecap="round" stroke-linejoin="round" stroke-width="1.5"/><path d="M511 1004 L516.3 998.6 L521.6 1004 M526.6 1005 L532.4 998.7 L538.2 1005 H535 V1010.7 H529.8 V1005 Z" fill="none" stroke="#8d9bb8" stroke-width="1.3" stroke-linejoin="round"/></svg><div class="t" style="left:461.60px;top:1005.12px;font-size:18.5px;color:#171c33;letter-spacing:-0.061px;">Item</div><div class="t" style="left:540.50px;top:1005.12px;font-size:18.5px;color:#8d9bb8;">N</div><div class="abs" style="left:12.8px;top:369px;width:314.5px;height:652.2px;background:linear-gradient(#fff 92%,#f8f8f9);border-radius:14px;box-shadow:0 2px 8px rgba(0,0,0,.18)"></div><svg class="abs" width="1802" height="1030" style="left:0;top:0"><rect x="41" y="417.8" width="257.8" height="52.8" rx="15" fill="#e5efed"/><rect x="46.2" y="424" width="247.7" height="41.7" rx="11" fill="#fff" stroke="#23805f" stroke-width="1.5"/><rect x="13.5" y="613.2" width="313" height="44.3" rx="12" fill="#edf3f1" stroke="#2c8a69" stroke-width="1.2"/><circle cx="275.4" cy="499.50" r="2" fill="#171c33"/><circle cx="282.6" cy="499.50" r="2" fill="#171c33"/><circle cx="289.8" cy="499.50" r="2" fill="#171c33"/><circle cx="275.4" cy="544.50" r="2" fill="#171c33"/><circle cx="282.6" cy="544.50" r="2" fill="#171c33"/><circle cx="289.8" cy="544.50" r="2" fill="#171c33"/><circle cx="275.4" cy="589.50" r="2" fill="#171c33"/><circle cx="282.6" cy="589.50" r="2" fill="#171c33"/><circle cx="289.8" cy="589.50" r="2" fill="#171c33"/><circle cx="275.4" cy="634.50" r="2" fill="#171c33"/><circle cx="282.6" cy="634.50" r="2" fill="#171c33"/><circle cx="289.8" cy="634.50" r="2" fill="#171c33"/><circle cx="275.4" cy="679.50" r="2" fill="#171c33"/><circle cx="282.6" cy="679.50" r="2" fill="#171c33"/><circle cx="289.8" cy="679.50" r="2" fill="#171c33"/><circle cx="275.4" cy="724.50" r="2" fill="#171c33"/><circle cx="282.6" cy="724.50" r="2" fill="#171c33"/><circle cx="289.8" cy="724.50" r="2" fill="#171c33"/><circle cx="275.4" cy="769.50" r="2" fill="#171c33"/><circle cx="282.6" cy="769.50" r="2" fill="#171c33"/><circle cx="289.8" cy="769.50" r="2" fill="#171c33"/><clipPath id="cl8"><rect x="13" y="790" width="314" height="28.6"/></clipPath><g clip-path="url(#cl8)"><circle cx="275.4" cy="814.50" r="2" fill="#171c33"/><circle cx="282.6" cy="814.50" r="2" fill="#171c33"/><circle cx="289.8" cy="814.50" r="2" fill="#171c33"/><path d="M49 821.90 a3.6 3.6 0 0 1 1.2 -6.8 a6.4 6.4 0 0 1 12.4 0.2 a3.6 3.6 0 0 1 1.4 6.6 Z" fill="#3b8fd8"/><path d="M56.5 815.90 v6 M53.8 818.70 l2.7 -2.8 l2.7 2.8" stroke="#fff" stroke-width="1.6" fill="none"/></g><path d="M48.8 500.2 L56.8 493 L64.8 500.2 H62.8 V507.4 H50.8 V500.2 Z" fill="#5aab5c"/><circle cx="56.8" cy="499.6" r="2.2" fill="#fff"/><path d="M52.6 507.4 a4.2 3.6 0 0 1 8.4 0 Z" fill="#fff"/><ellipse cx="56.5" cy="545.2" rx="10" ry="3.3" transform="rotate(45 56.5 545.2)" fill="none" stroke="#6ccfe0" stroke-width="1.3"/><circle cx="56.5" cy="545.2" r="6.6" fill="#6ccfe0" stroke="#fff" stroke-width="0.8"/><circle cx="54.4" cy="543.8" r="1" fill="#fff"/><circle cx="58.6" cy="543.6" r="1" fill="#fff"/><circle cx="56.8" cy="547.8" r="1" fill="#fff"/><path d="M49.2 586 Q52.6 587.6 53 595.4 M53 591.6 Q53.6 588.8 56 587.6" fill="none" stroke="#a94d9a" stroke-width="1.4" stroke-linecap="round"/><circle cx="61.6" cy="588.4" r="3.2" fill="#a94d9a"/><g transform="translate(48.8,628.8) scale(1.0)"><polygon points="0,3.95 8,0 16,3.95 8,7.9" fill="#5cac5e" stroke="#5cac5e" stroke-width="0.5" stroke-linejoin="round"/><path d="M2.5,7.1 L8,9.5 L13.5,7.1 V11.2 Q13.5,13.2 8,13.2 Q2.5,13.2 2.5,11.2 Z" fill="#5cac5e"/><rect x="14.7" y="6.1" width="1.4" height="3.9" rx="0.7" fill="#5cac5e"/></g><text x="50.8" y="687.2" font-family="Liberation Sans" font-weight="700" font-size="19" fill="#5aab5c">$</text><path d="M50 731.5 l2.5 -2 M62.6 718.6 q-6.5 0.3 -10 6 l4.2 4.2 q5.5 -3.5 5.8 -10.2 Z M52.2 724.4 l-2.6 0.6 l1.6 -3 M56.8 729 l-0.6 2.6 l3 -1.6" fill="#3b8fd8" stroke="#3b8fd8" stroke-width="1.2" stroke-linejoin="round"/><g fill="none" stroke="#7ad3e0" stroke-width="1.3"><polygon points="56.5,763 63.2,766.8 63.2,774.4 56.5,778.2 49.8,774.4 49.8,766.8"/><polygon points="56.5,766.6 60,768.7 60,772.6 56.5,774.6 53,772.6 53,768.7"/><path d="M56.5 763 V766.6 M63.2 766.8 L60 768.7 M63.2 774.4 L60 772.6 M56.5 778.2 V774.6 M49.8 774.4 L53 772.6 M49.8 766.8 L53 768.7"/></g><rect x="13" y="818.2" width="314" height="1.2" fill="#e3e8f0"/><circle cx="61.8" cy="846.4" r="2.6" fill="none" stroke="#171c33" stroke-width="1.4" stroke-linecap="round" stroke-linejoin="round"/><circle cx="50.4" cy="853" r="2.6" fill="none" stroke="#171c33" stroke-width="1.4" stroke-linecap="round" stroke-linejoin="round"/><circle cx="61.8" cy="859.8" r="2.6" fill="none" stroke="#171c33" stroke-width="1.4" stroke-linecap="round" stroke-linejoin="round"/><path d="M52.7 851.7 L59.5 847.7 M52.7 854.3 L59.5 858.5" fill="none" stroke="#171c33" stroke-width="1.4" stroke-linecap="round" stroke-linejoin="round"/><path d="M56.5 889.8 L64.2 894.2 L56.5 898.6 L48.8 894.2 Z M48.8 897.8 L56.5 902.2 L64.2 897.8 M48.8 901.4 L56.5 905.8 L64.2 901.4" fill="none" stroke="#171c33" stroke-width="1.4" stroke-linecap="round" stroke-linejoin="round"/><circle cx="55.3" cy="941.6" r="6.6" fill="none" stroke="#171c33" stroke-width="1.4" stroke-linecap="round" stroke-linejoin="round"/><path d="M60.2 946.5 L63.8 950" fill="none" stroke="#171c33" stroke-width="1.4" stroke-linecap="round" stroke-linejoin="round"/><path d="M56 980.8 V995 M48.9 987.9 H63.1" fill="none" stroke="#171c33" stroke-width="1.4" stroke-linecap="round" stroke-linejoin="round" stroke-width="1.5"/></svg><div class="t" style="left:45.59px;top:401.25px;font-size:15.8px;color:#4a5a7a;-webkit-text-stroke:0.38px #4a5a7a;letter-spacing:0.712px;">My spaces</div><div class="t" style="left:57.50px;top:445.82px;font-size:18.5px;color:#4a5a7a;letter-spacing:-0.100px;">Search</div><div class="t" style="left:78.50px;top:501.22px;font-size:18.5px;color:#171c33;letter-spacing:-0.061px;">Personal</div><div class="t" style="left:78.50px;top:546.22px;font-size:18.5px;color:#171c33;letter-spacing:0.184px;">First space</div><div class="t" style="left:78.50px;top:591.22px;font-size:18.5px;color:#171c33;letter-spacing:0.493px;">Go-To-Market</div><div class="t" style="left:78.50px;top:636.22px;font-size:18.5px;color:#171c33;letter-spacing:0.081px;">Knowledge Base</div><div class="t" style="left:78.50px;top:681.22px;font-size:18.5px;color:#171c33;letter-spacing:0.313px;">Monthly Budget Tr...</div><div class="t" style="left:78.50px;top:726.22px;font-size:18.5px;color:#171c33;letter-spacing:0.276px;">Product Launches</div><div class="t" style="left:78.50px;top:771.22px;font-size:18.5px;color:#171c33;letter-spacing:0.117px;">Rebranding</div><div class="abs" style="left:13px;top:790px;width:314px;height:28.6px;overflow:hidden"><div class="t" style="left:65.50px;top:26.22px;font-size:18.5px;color:#171c33;letter-spacing:0.078px;">SaaS Deployment</div></div><div class="t" style="left:78.40px;top:852.92px;font-size:18.5px;color:#171c33;letter-spacing:0.229px;">Shared with me</div><div class="t" style="left:78.40px;top:898.32px;font-size:18.5px;color:#171c33;letter-spacing:0.302px;">Blueprints</div><div class="t" style="left:78.60px;top:943.32px;font-size:18.5px;color:#171c33;letter-spacing:0.264px;">Browse other spaces</div><div class="t" style="left:78.40px;top:988.42px;font-size:18.5px;color:#171c33;letter-spacing:-0.112px;">Space</div><svg class="abs" width="1802" height="1030" style="left:0;top:0"><line x1="317" y1="357" x2="415" y2="453" stroke="#0dcf62" stroke-width="5"/><rect x="314" y="354.3" width="29.1" height="4.6" fill="#0dcf62"/><rect x="314" y="354.3" width="4.9" height="28.8" fill="#0dcf62"/><circle cx="436.3" cy="471.2" r="29.1" fill="#0dcf62" fill-opacity="0.18"/><circle cx="436.3" cy="471.2" r="20.1" fill="#0dcf62"/><rect x="39.1" y="969.1" width="150" height="38.8" rx="8.5" fill="none" stroke="#0dcf62" stroke-width="6"/><circle cx="212.2" cy="980.3" r="26.8" fill="#0dcf62" fill-opacity="0.18"/><circle cx="212.2" cy="980.3" r="18.6" fill="#0dcf62"/><path d="M431.6 464.3 Q433.6 462.6 436.2 462.6 Q440.1 462.6 440.1 466.1 Q440.1 469.7 435.4 469.7 Q441 469.7 441 473.7 Q441 477.7 435.9 477.7 Q432.9 477.7 431 475.7" fill="none" stroke="#fff" stroke-width="2.7" stroke-linecap="round" stroke-linejoin="round"/><path d="M216.2 987 V972.4 H214.8 L207.4 982.6 H218.4" fill="none" stroke="#fff" stroke-width="2.7" stroke-linejoin="round"/></svg>
</div></div>
</body></html>
